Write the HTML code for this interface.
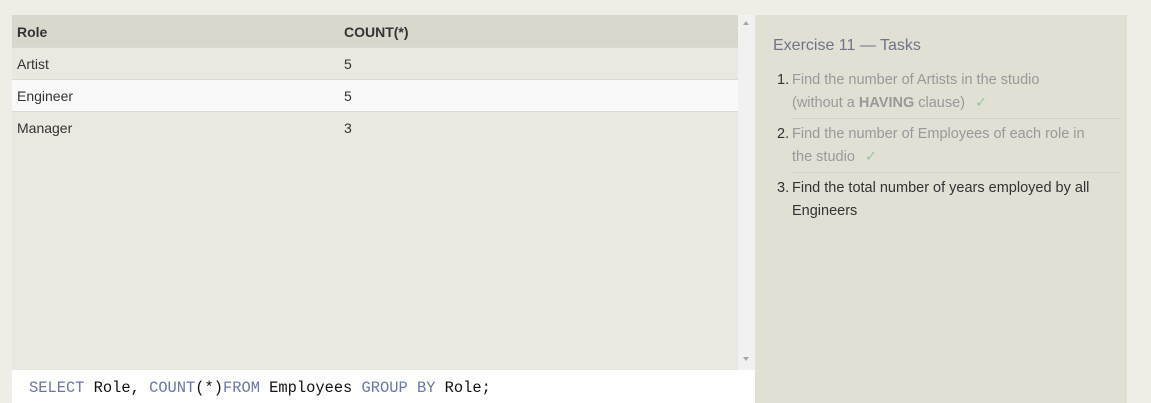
<html><head><style>
body{margin:0;width:1151px;height:403px;background:#efede5;font-family:"Liberation Sans",sans-serif;position:relative;overflow:hidden}
.tbl{position:absolute;left:12px;top:15px;width:726px;height:355px;background:#eae8e0}
.row{position:absolute;left:0;width:726px;height:32px;font-size:14px;color:#333;border-bottom:1px solid #dcdad2;box-sizing:border-box}
.row span{position:absolute;top:8px}
.c1{left:5px}.c2{left:332px}
.sb{position:absolute;left:738px;top:15px;width:17px;height:355px;background:#f1f1f1}
.code{position:absolute;left:12px;top:370px;width:743px;height:33px;background:#fff;font-family:"Liberation Mono",monospace;font-size:15.4px;color:#111}
.k{color:#6a76a8}
.panel{position:absolute;left:755px;top:15px;width:372px;height:388px;background:#e2dfd4}
.t{position:absolute;left:18px;top:22px;font-size:16px;color:#6f7486}
.it{position:absolute;left:37px;width:330px;font-size:14.5px;line-height:23px;color:#999;white-space:nowrap}
.n{position:absolute;left:-15px;color:#333}
.line{position:absolute;left:37px;width:328px;border-top:1px solid #d2cfc4}
.ck{color:#8ccf9a;margin-left:10px}
</style></head><body>
<div class="tbl">
<div class="row" style="top:0;height:33px;background:#dad8cc;font-weight:bold"><span class="c1" style="top:9px">Role</span><span class="c2" style="top:9px">COUNT(*)</span></div>
<div class="row" style="top:33px"><span class="c1">Artist</span><span class="c2">5</span></div>
<div class="row" style="top:65px;background:#f9f9f9"><span class="c1">Engineer</span><span class="c2">5</span></div>
<div class="row" style="top:97px;border:none"><span class="c1">Manager</span><span class="c2">3</span></div>
</div>
<div class="sb"><div style="position:absolute;left:5px;top:6px;border:3px solid transparent;border-bottom:4px solid #a8a8a8;border-top:0"></div><div style="position:absolute;left:5px;top:342px;border:3px solid transparent;border-top:4px solid #a8a8a8;border-bottom:0"></div></div>
<div class="code"><span style="position:absolute;left:17px;top:9px;white-space:pre"><span class="k">SELECT</span> Role, <span class="k">COUNT</span>(*)<span class="k">FROM</span> Employees <span class="k">GROUP BY</span> Role;</span></div>
<div class="panel">
<div class="t">Exercise 11 — Tasks</div>
<div class="it" style="top:54px"><span class="n">1.</span>Find the number of Artists in the studio<br>(without a <b>HAVING</b> clause)<span class="ck">✓</span></div>
<div class="line" style="top:103px"></div>
<div class="it" style="top:108px"><span class="n">2.</span>Find the number of Employees of each role in<br>the studio<span class="ck">✓</span></div>
<div class="line" style="top:157px"></div>
<div class="it" style="top:162px;color:#333"><span class="n">3.</span>Find the total number of years employed by all<br>Engineers</div>
</div>
</body></html>
